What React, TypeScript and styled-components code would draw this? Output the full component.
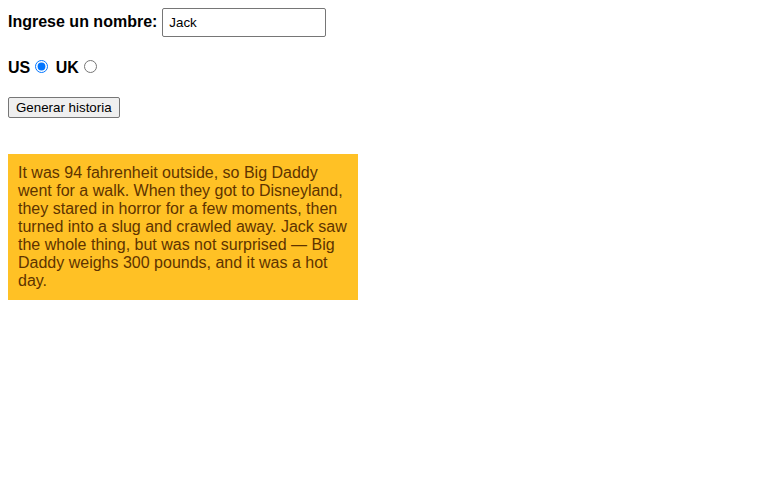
import React, { useState } from 'react';
import styled, { createGlobalStyle } from 'styled-components';

const GlobalStyle = createGlobalStyle`
    body {
        margin: 8px;
        font-family: "Liberation Sans", Arial, Helvetica, sans-serif;
        font-size: 16px;
        width: 350px;
        background: #ffffff;
        color: #000000;
    }
`

const Row = styled.div`
    padding-bottom: 20px;
`

const Label = styled.label`
    font-weight: bold;
`

const NameInput = styled.input`
    padding: 6px;
    width: 150px;
    font-family: "Liberation Sans", Arial, sans-serif;
    font-size: 13.33px;
    border: 1px solid #767676;
    border-radius: 2px;
    margin-left: 5px;
`

const Radio = styled.input`
    margin: 3px 3px 0 5px;
    accent-color: #0075ff;
`

const Button = styled.button`
    font-family: "Liberation Sans", Arial, sans-serif;
    font-size: 13.33px;
    padding: 2px 7px;
    border: 1px solid #767676;
    border-radius: 2px;
    background: #efefef;
    color: #000;
`

const Story = styled.p`
    margin: 16px 0;
    padding: 10px;
    background: #ffc125;
    color: #5e3400;
    line-height: 18px;
`

const App = () => {
    const [name, setName] = useState('Jack');
    const [country, setCountry] = useState('us');

    return (
        <>
            <GlobalStyle />
            <Row>
                <Label htmlFor="customname">Ingrese un nombre:</Label>
                <NameInput id="customname" type="text" value={name} onChange={e => setName(e.target.value)} />
            </Row>
            <Row>
                <Label htmlFor="us">US</Label>
                <Radio id="us" type="radio" name="ukus" checked={country === 'us'} onChange={() => setCountry('us')} />
                {' '}
                <Label htmlFor="uk">UK</Label>
                <Radio id="uk" type="radio" name="ukus" checked={country === 'uk'} onChange={() => setCountry('uk')} />
            </Row>
            <Row>
                <Button>Generar historia</Button>
            </Row>
            <Story>
                It was 94 fahrenheit outside, so Big Daddy went for a walk. When they got to Disneyland, they stared in horror for a few moments, then turned into a slug and crawled away. {name} saw the whole thing, but was not surprised — Big Daddy weighs 300 pounds, and it was a hot day.
            </Story>
        </>
    );
}

export default App;
